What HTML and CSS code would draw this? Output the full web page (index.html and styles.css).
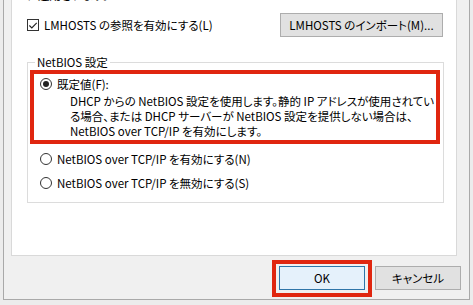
FILE: index.html
```html
<!DOCTYPE html>
<html lang="ja">
<head>
<meta charset="utf-8">
<title>NetBIOS</title>
<link rel="stylesheet" href="styles.css">
</head>
<body>
<div class="window">
  <div class="panel">
    <p class="cut">に適用されます。</p>
    <div class="row">
      <label class="check"><span class="box"><svg width="11" height="11" viewBox="0 0 11 11"><path d="M1.5 5.5 L4.2 8.2 L9.6 2.6" fill="none" stroke="#222" stroke-width="1.2"/></svg></span>LMHOSTS の参照を有効にする(L)</label>
      <button class="btn import">LMHOSTS のインポート(M)...</button>
    </div>
    <fieldset class="group">
      <legend>NetBIOS 設定</legend>
      <div class="mark">
        <div class="radio-row"><span class="radio on"></span>既定値(F):</div>
        <p class="desc">DHCP からの NetBIOS 設定を使用します。静的 IP アドレスが使用されてい<br>る場合、または DHCP サーバーが NetBIOS 設定を提供しない場合は、<br>NetBIOS over TCP/IP を有効にします。</p>
      </div>
      <div class="radio-row opt"><span class="radio"></span>NetBIOS over TCP/IP を有効にする(N)</div>
      <div class="radio-row opt"><span class="radio"></span>NetBIOS over TCP/IP を無効にする(S)</div>
    </fieldset>
  </div>
  <div class="buttons">
    <div class="mark-btn"><button class="btn ok">OK</button></div>
    <button class="btn cancel">キャンセル</button>
  </div>
</div>
</body>
</html>
```
FILE: styles.css
```css
html, body {
  margin: 0;
  padding: 0;
  height: 305px;
  overflow: hidden;
}
body {
  background: #ececec;
  font-family: "Noto Sans CJK JP", sans-serif;
  font-size: 11.5px;
  font-feature-settings: "palt";
  color: #000;
}
.window {
  box-sizing: border-box;
  margin-left: 3px;
  width: 467px;
  height: 300px;
  border: solid #a9a9a9;
  border-width: 0 1px 1px 1px;
  background: #f0f0f0;
  padding-left: 7px;
  display: flex;
  flex-direction: column;
}
.panel {
  box-sizing: border-box;
  margin-top: -1px;
  width: 446px;
  height: 257px;
  border: 1px solid #d9d9d9;
  background: #fff;
  padding: 0 12px 0 15px;
  overflow: hidden;
}
.cut {
  margin: -12px 0 0 0;
  line-height: 15px;
  white-space: nowrap;
}
.row {
  margin-top: 10px;
  height: 24px;
  display: flex;
  align-items: center;
  justify-content: space-between;
}
.check {
  display: flex;
  align-items: center;
  white-space: nowrap;
  line-height: 16px;
}
.box {
  box-sizing: border-box;
  width: 12px;
  height: 12px;
  border: 1px solid #333;
  background: #fff;
  margin-right: 5px;
  display: flex;
  align-items: center;
  justify-content: center;
}
.box svg { display: block; }
.btn {
  box-sizing: border-box;
  font: inherit;
  font-feature-settings: "palt";
  color: #000;
  height: 24px;
  padding: 0;
  background: #e1e1e1;
  border: 1px solid #adadad;
  white-space: nowrap;
}
.import {
  width: 163px;
  margin-right: 1px;
}
.group {
  margin: 18px 0 0 0;
  padding: 0 3px 7px 2px;
  border: 1px solid #dcdcdc;
  min-width: 0;
}
.group legend {
  margin-left: 5px;
  padding: 0 2px;
  line-height: 15px;
}
.mark {
  border: 4px solid #e0260f;
  padding: 0 0 1px 0;
}
.radio-row {
  display: flex;
  align-items: center;
  white-space: nowrap;
  line-height: 16px;
  margin-top: 2px;
  padding-left: 6px;
}
.radio {
  box-sizing: border-box;
  width: 12px;
  height: 12px;
  border: 1px solid #333;
  border-radius: 50%;
  background: #fff;
  margin-right: 5px;
  display: flex;
  align-items: center;
  justify-content: center;
  flex: none;
}
.radio.on::after {
  content: "";
  width: 6px;
  height: 6px;
  border-radius: 50%;
  background: #222;
}
.desc {
  margin: 2px 0 0 0;
  padding-left: 36px;
  line-height: 15px;
  white-space: nowrap;
}
.radio-row.opt {
  margin-top: 0;
  height: 24px;
  padding-left: 10px;
}
.mark + .opt { margin-top: 3px; }
.buttons {
  margin-top: 4px;
  padding-right: 8px;
  display: flex;
  justify-content: flex-end;
  align-items: flex-start;
}
.mark-btn {
  border: 4px solid #e0260f;
  padding: 2px 3px 3px 3px;
}
.ok {
  width: 86px;
  display: block;
  background: #e5f1fb;
  border-color: #2e75a8;
}
.cancel {
  width: 86px;
  margin-left: 3px;
  margin-top: 6px;
}
```
